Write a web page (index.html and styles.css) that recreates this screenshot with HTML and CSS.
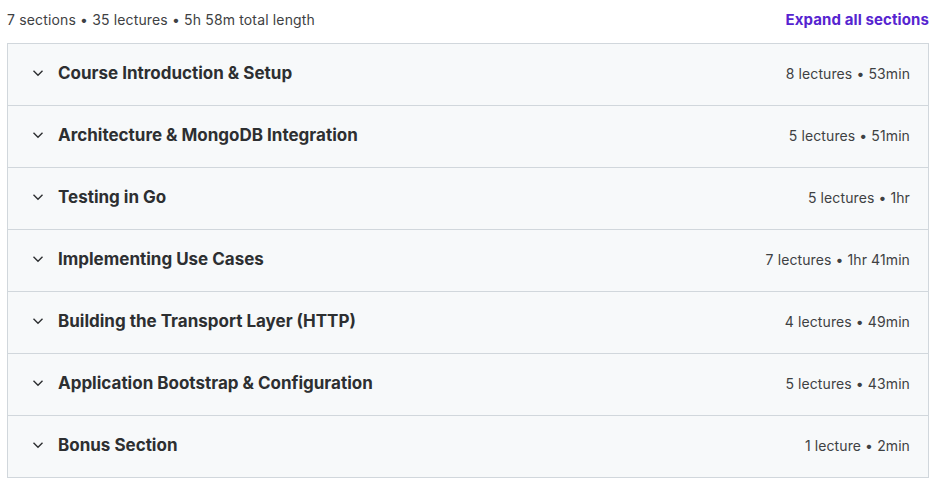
FILE: index.html
```html
<!DOCTYPE html>
<html lang="en">
<head>
<meta charset="utf-8">
<title>Course content</title>
<link rel="stylesheet" href="styles.css">
</head>
<body>
<div class="curriculum">
  <div class="curriculum-header">
    <span class="curriculum-stats">7 sections • 35 lectures • 5h 58m total length</span>
    <button class="expand-all">Expand all sections</button>
  </div>
  <div class="section-list">
    <div class="section-row">
      <svg class="chevron" viewBox="0 0 12 8"><path d="M1.5 1.8 L6 6.2 L10.5 1.8" /></svg>
      <span class="section-title">Course Introduction &amp; Setup</span>
      <span class="section-meta">8 lectures • 53min</span>
    </div>
    <div class="section-row">
      <svg class="chevron" viewBox="0 0 12 8"><path d="M1.5 1.8 L6 6.2 L10.5 1.8" /></svg>
      <span class="section-title">Architecture &amp; MongoDB Integration</span>
      <span class="section-meta">5 lectures • 51min</span>
    </div>
    <div class="section-row">
      <svg class="chevron" viewBox="0 0 12 8"><path d="M1.5 1.8 L6 6.2 L10.5 1.8" /></svg>
      <span class="section-title">Testing in Go</span>
      <span class="section-meta">5 lectures • 1hr</span>
    </div>
    <div class="section-row">
      <svg class="chevron" viewBox="0 0 12 8"><path d="M1.5 1.8 L6 6.2 L10.5 1.8" /></svg>
      <span class="section-title">Implementing Use Cases</span>
      <span class="section-meta">7 lectures • 1hr 41min</span>
    </div>
    <div class="section-row">
      <svg class="chevron" viewBox="0 0 12 8"><path d="M1.5 1.8 L6 6.2 L10.5 1.8" /></svg>
      <span class="section-title">Building the Transport Layer (HTTP)</span>
      <span class="section-meta">4 lectures • 49min</span>
    </div>
    <div class="section-row">
      <svg class="chevron" viewBox="0 0 12 8"><path d="M1.5 1.8 L6 6.2 L10.5 1.8" /></svg>
      <span class="section-title">Application Bootstrap &amp; Configuration</span>
      <span class="section-meta">5 lectures • 43min</span>
    </div>
    <div class="section-row">
      <svg class="chevron" viewBox="0 0 12 8"><path d="M1.5 1.8 L6 6.2 L10.5 1.8" /></svg>
      <span class="section-title">Bonus Section</span>
      <span class="section-meta">1 lecture • 2min</span>
    </div>
  </div>
</div>
</body>
</html>
```
FILE: styles.css
```css
* { box-sizing: border-box; }

body {
  margin: 0;
  background: #ffffff;
  font-family: Inter, "Noto Sans", "DejaVu Sans", sans-serif;
  color: #2d2f31;
}

.curriculum {
  padding: 0 6px 0 7px;
}

.curriculum-header {
  height: 43px;
  display: flex;
  align-items: center;
  justify-content: space-between;
  padding-bottom: 4px;
}

.curriculum-stats {
  font-size: 14px;
  letter-spacing: 0.15px;
  color: #3e4143;
}

.expand-all {
  border: 0;
  background: none;
  padding: 0;
  font-family: inherit;
  font-size: 15px;
  font-weight: 700;
  letter-spacing: 0.1px;
  color: #5624d0;
  cursor: pointer;
}

.section-list {
  border: 1px solid #d1d7dc;
}

.section-row {
  height: 62px;
  display: flex;
  align-items: center;
  padding: 0 18px 3px 24px;
  background: #f7f9fa;
  border-bottom: 1px solid #d1d7dc;
}

.section-row:last-child {
  border-bottom: 0;
  height: 61px;
}

.chevron {
  width: 12px;
  height: 8px;
  flex: none;
  fill: none;
  stroke: #2d2f31;
  stroke-width: 1.4;
  margin-right: 14px;
}

.section-title {
  flex: 1;
  font-size: 17px;
  font-weight: 700;
  color: #2d2f31;
}

.section-meta {
  font-size: 14px;
  letter-spacing: 0.1px;
  color: #3e4143;
}
```
